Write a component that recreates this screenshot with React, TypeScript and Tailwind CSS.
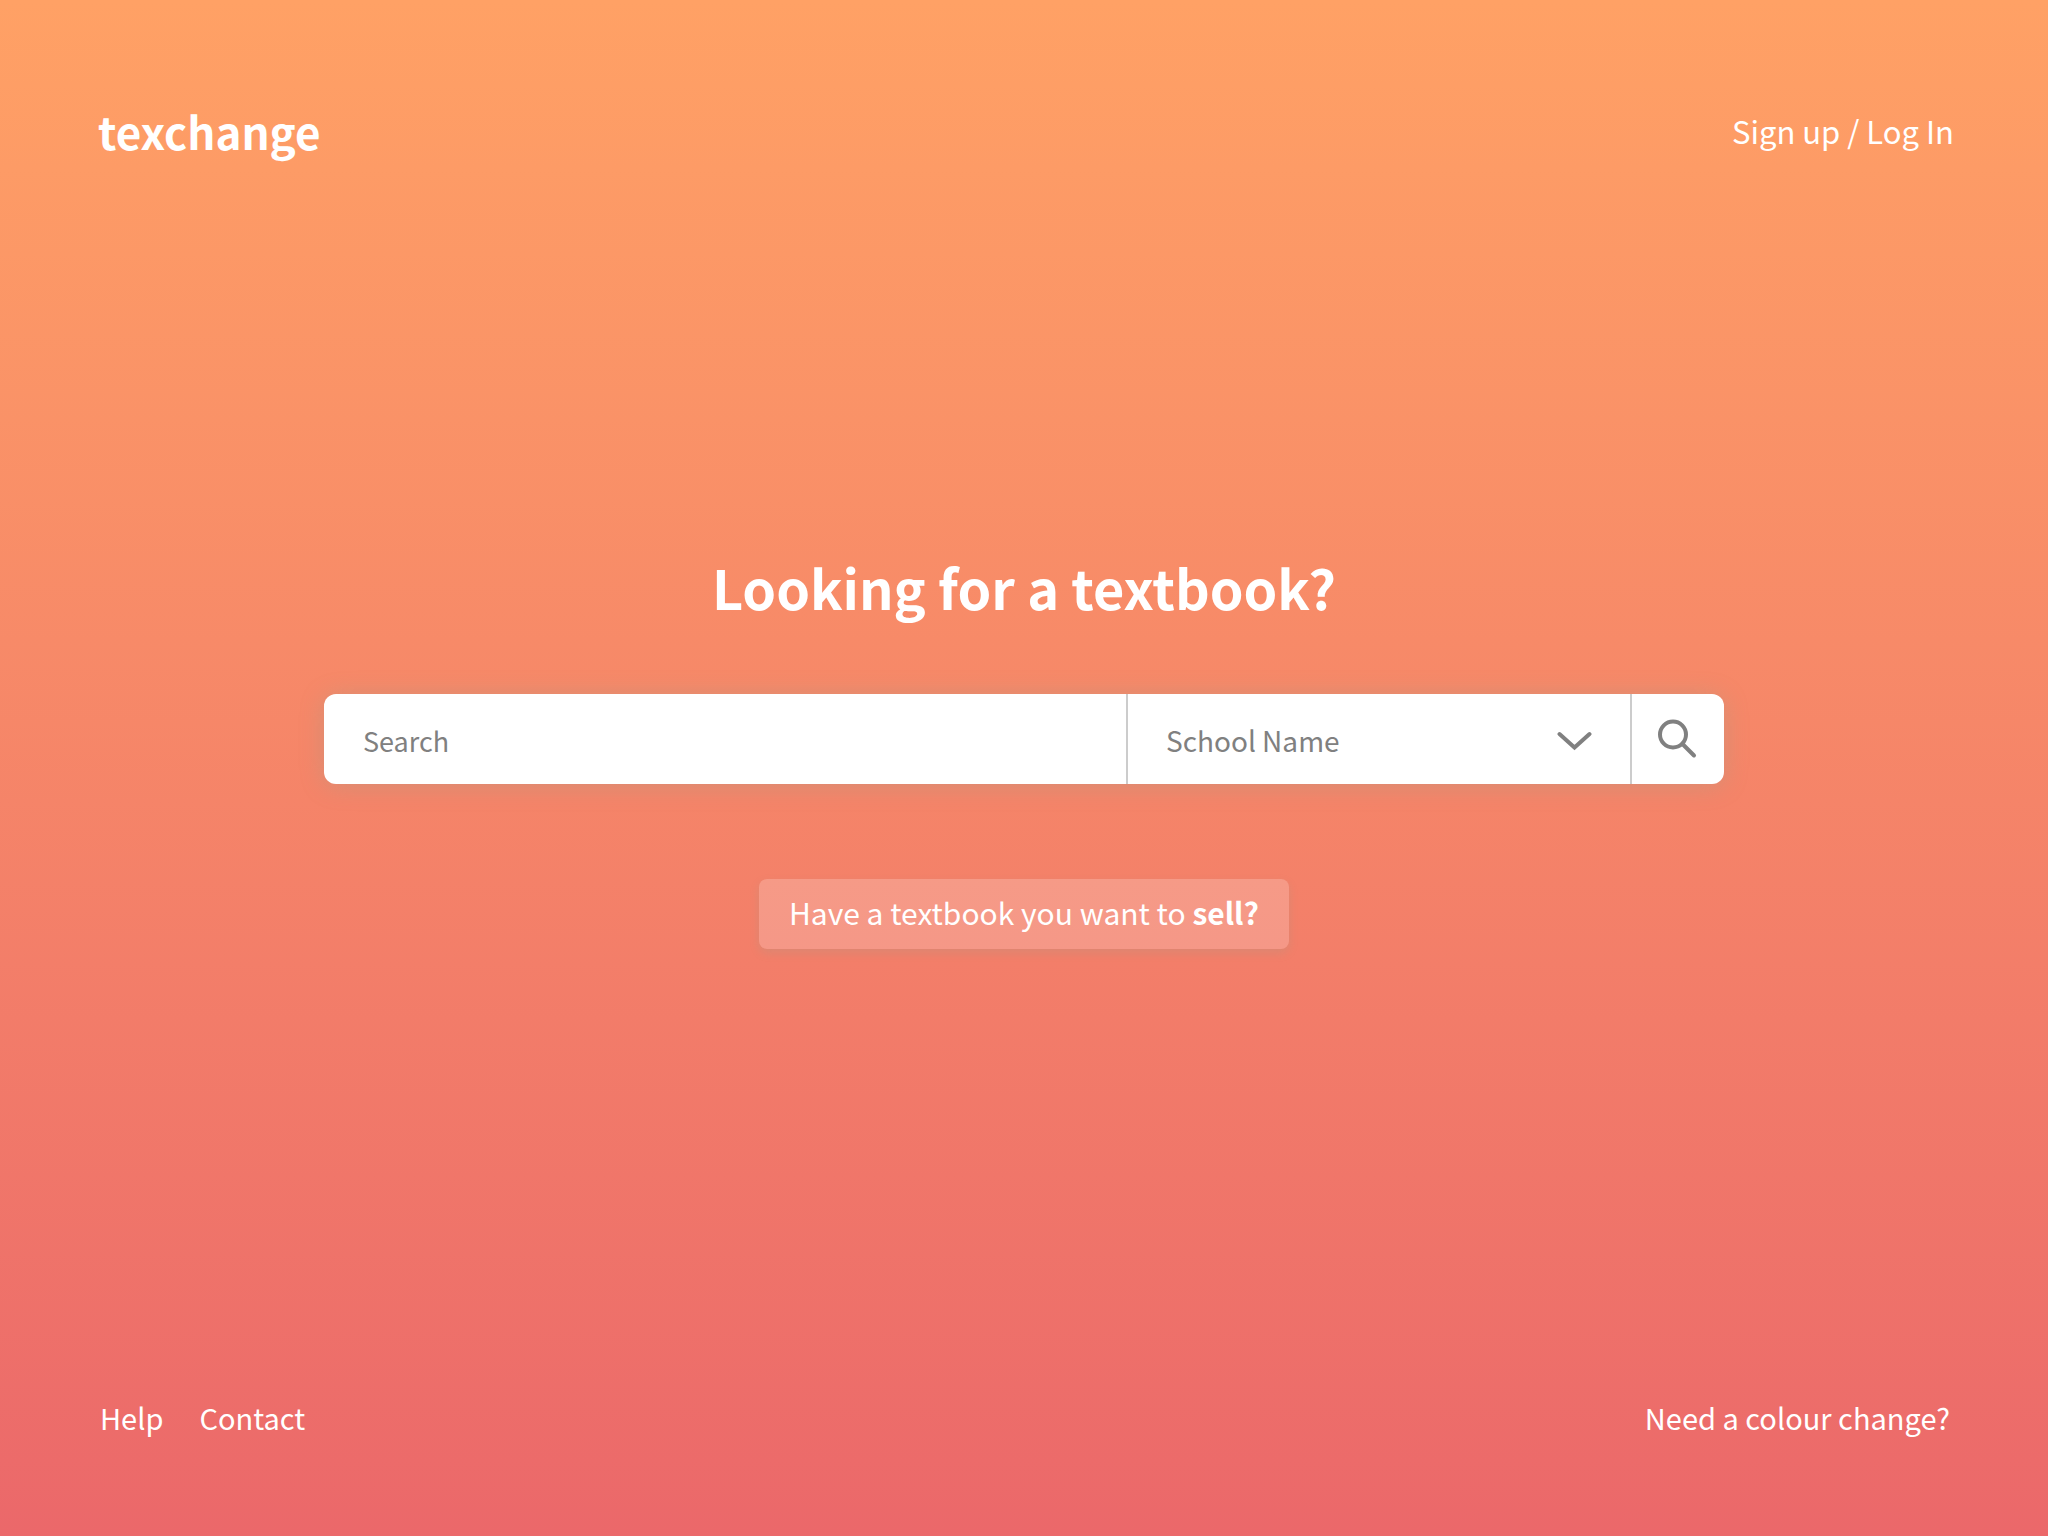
function ChevronIcon() {
  return (
    <svg className="pointer-events-none absolute top-9 right-[37px] h-[22px] w-9" viewBox="0 0 36 22" fill="none" stroke="#808080" strokeWidth="4" strokeLinecap="round" strokeLinejoin="miter" aria-hidden="true">
      <path d="M2.5 4 17.5 17.5 32.5 4" />
    </svg>
  );
}

function SearchIcon() {
  return (
    <svg className="h-10 w-10" viewBox="0 0 40 40" fill="none" stroke="#808080" strokeWidth="4" strokeLinecap="round" aria-hidden="true">
      <circle cx="15" cy="15.5" r="13" />
      <path d="M24.5 25 36 36.5" />
    </svg>
  );
}

export default function App() {
  return (
    <div className="flex min-h-screen flex-col bg-linear-to-b from-[#ffa165] to-[#eb686a] font-['Noto_Sans_CJK_SC',sans-serif] text-white">
      <header className="flex items-center justify-between pt-[99px] pr-[94px] pl-[98px]">
        <a href="#" className="text-[44px] leading-[64px] font-bold">texchange</a>
        <a href="#" className="text-[31px] leading-[64px]">Sign up / Log In</a>
      </header>

      <main className="flex flex-1 flex-col items-center px-24 pt-[384px]">
        <h1 className="text-[54px] leading-[80px] font-bold">Looking for a textbook?</h1>
        <form className="mt-[67px] flex h-[90px] w-full max-w-[1400px] rounded-xl bg-white text-[#808080] shadow-[0_2px_24px_rgba(130,170,150,0.28)]">
          <input
            type="search"
            aria-label="Search"
            placeholder="Search"
            className="min-w-0 flex-1 rounded-l-xl px-[39px] pt-1 text-[27px] outline-none placeholder:text-[#808080] placeholder:opacity-100"
          />
          <div className="relative w-[506px] border-x-2 border-[#cccccc]">
            <select aria-label="School Name" className="h-full w-full appearance-none pt-0.5 pl-[38px] text-[28px] outline-none">
              <option>School Name</option>
            </select>
            <ChevronIcon />
          </div>
          <button type="submit" aria-label="Submit search" className="flex w-[92px] items-center justify-center rounded-r-xl">
            <SearchIcon />
          </button>
        </form>
        <button type="button" className="mt-[95px] h-[70px] rounded-lg bg-white/20 px-[30px] pb-1 text-[30px] shadow-[0_4px_10px_rgba(130,170,150,0.2)]">
          Have a textbook you want to <span className="font-bold">sell?</span>
        </button>
      </main>

      <footer className="flex items-center justify-between pr-[98px] pb-[95px] pl-[100px] text-[29px] leading-[48px]">
        <nav className="flex gap-9">
          <a href="#">Help</a>
          <a href="#">Contact</a>
        </nav>
        <a href="#">Need a colour change?</a>
      </footer>
    </div>
  );
}
